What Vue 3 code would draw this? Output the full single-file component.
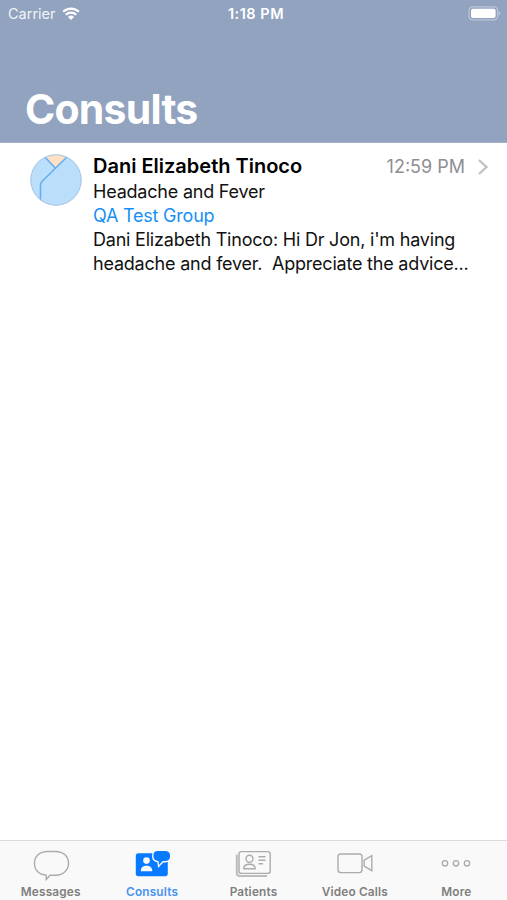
<template>
  <div class="screen">
    <header class="header">
      <div class="status-bar">
        <div class="carrier">
          <span>Carrier</span>
          <svg class="wifi" width="18" height="14" viewBox="0 0 18 14">
            <path d="M1.2 4.8A11 11 0 0 1 16.8 4.8" />
            <path d="M3.9 7.8A7.2 7.2 0 0 1 14.1 7.8" />
            <path class="dot" d="M9 13L6 10A4.3 4.3 0 0 1 12 10Z" />
          </svg>
        </div>
        <span class="clock">1:18 PM</span>
        <div class="battery">
          <svg width="33" height="16" viewBox="0 0 33 16">
            <rect class="case" x="1" y="0.8" width="28.6" height="13" rx="3.6" />
            <rect class="level" x="3" y="2.7" width="24.6" height="9.2" rx="2" />
            <path class="tip" d="M30.7 5Q32.3 5.7 32.3 7.3T30.7 9.6Z" />
          </svg>
        </div>
      </div>
      <h1>Consults</h1>
    </header>

    <main class="list">
      <article v-for="item in consults" :key="item.id" class="consult">
        <svg class="avatar" width="52" height="52" viewBox="0 0 52 52">
          <defs>
            <clipPath id="avatar-clip"><circle cx="26" cy="26" r="25.5" /></clipPath>
          </defs>
          <g clip-path="url(#avatar-clip)">
            <rect width="52" height="52" fill="#bbdefb" />
            <path d="M11 -1L25.5 14.2L41 -1Z" fill="#ffe0c2" />
            <path class="fold" d="M12 0L25.5 14.2M40 0L12.2 27.3Q10.5 29 10.5 31.5V47" />
          </g>
          <circle class="ring" cx="26" cy="26" r="25.2" />
        </svg>
        <div class="content">
          <div class="top-row">
            <h2>{{ item.name }}</h2>
            <time>{{ item.time }}</time>
            <svg class="chevron" width="12" height="18" viewBox="0 0 12 18">
              <path d="M2 2L9.5 9L2 16" />
            </svg>
          </div>
          <p class="subject">{{ item.subject }}</p>
          <p class="group">{{ item.group }}</p>
          <p class="preview">
            <span v-for="line in item.preview" :key="line">{{ line }}</span>
          </p>
        </div>
      </article>
    </main>

    <nav class="tab-bar">
      <button
        v-for="tab in tabs"
        :key="tab.id"
        class="tab"
        :class="[tab.id, { active: tab.id === activeTab }]"
        @click="activeTab = tab.id"
      >
        <svg v-if="tab.id === 'messages'" width="40" height="34" viewBox="0 0 40 34">
          <path d="M16.5 3.5H24.5C32.5 3.5 37.5 8.5 37.5 15.2S32.5 27.2 24.5 27.2H19.2L15.2 31.5V27.1C7.8 26.8 3.5 21.8 3.5 15.2C3.5 8.5 8.5 3.5 16.5 3.5Z" />
        </svg>
        <svg v-else-if="tab.id === 'consults'" width="40" height="34" viewBox="0 0 40 34">
          <rect class="solid" x="3.8" y="5.2" width="32" height="23" rx="2.6" />
          <circle class="cutout" cx="14.5" cy="12.6" r="3.3" />
          <path class="cutout" d="M8.8 23.3C8.8 19.4 11.1 17.8 14.5 17.8S20.3 19.4 20.3 23.3Z" />
          <path class="bubble" d="M26 2.2H33Q38.8 2.2 38.8 8T33 13.8H31L26.6 18.5L26 13.8Q20.7 13 20.7 8Q20.7 2.2 26 2.2Z" />
        </svg>
        <svg v-else-if="tab.id === 'patients'" width="40" height="34" viewBox="0 0 40 34">
          <path class="shadow" d="M3.8 6.5V25Q3.8 28 7 28H34" />
          <rect x="6" y="3.6" width="31.2" height="21.8" rx="2.5" />
          <circle cx="16.5" cy="10.8" r="3.5" />
          <path d="M10.8 20.8C10.8 17.7 13.3 16.2 16.5 16.2S22.2 17.7 22.2 20.8Z" />
          <path d="M25.5 8.8H32.5M25.5 12.3H32.5M25.5 15.8H30" />
        </svg>
        <svg v-else-if="tab.id === 'video'" width="40" height="34" viewBox="0 0 40 34">
          <rect x="3" y="6" width="24" height="18.6" rx="2.8" />
          <path d="M29.2 12.2L36.8 7.7V22.7L29.2 18.2Z" />
        </svg>
        <svg v-else width="40" height="34" viewBox="0 0 40 34">
          <circle cx="9" cy="15.3" r="2.7" />
          <circle cx="20" cy="15.3" r="2.7" />
          <circle cx="31" cy="15.3" r="2.7" />
        </svg>
        <span class="label">{{ tab.label }}</span>
      </button>
    </nav>
  </div>
</template>

<script setup>
import { ref } from 'vue'

const activeTab = ref('consults')

const consults = ref([
  {
    id: 1,
    name: 'Dani Elizabeth Tinoco',
    time: '12:59 PM',
    subject: 'Headache and Fever',
    group: 'QA Test Group',
    preview: [
      "Dani Elizabeth Tinoco: Hi Dr Jon, i'm having",
      'headache and fever.  Appreciate the advice...'
    ]
  }
])

const tabs = [
  { id: 'messages', label: 'Messages' },
  { id: 'consults', label: 'Consults' },
  { id: 'patients', label: 'Patients' },
  { id: 'video', label: 'Video Calls' },
  { id: 'more', label: 'More' }
]
</script>

<style>
body {
  margin: 0;
  background: #fff;
}
</style>

<style scoped>
.screen {
  display: flex;
  flex-direction: column;
  height: 900px;
  font-family: Inter, 'Liberation Sans', sans-serif;
  color: #111;
  background: #fff;
}

h1,
h2,
p {
  margin: 0;
}

svg {
  display: block;
  flex: none;
}

.header {
  display: flex;
  flex-direction: column;
  justify-content: space-between;
  height: 143px;
  box-sizing: border-box;
  color: #fff;
  background: #92a3bf;
  border-bottom: 1px solid #a3aec5;
}

.status-bar {
  display: grid;
  grid-template-columns: 1fr auto 1fr;
  align-items: center;
  height: 27px;
  padding: 0 6px 0 8px;
  font-size: 14.5px;
}

.carrier {
  display: flex;
  align-items: center;
  gap: 6px;
  color: #f0f3f8;
}

.wifi path {
  fill: none;
  stroke: #fff;
  stroke-width: 2.3;
}

.wifi .dot {
  fill: #fff;
  stroke: none;
}

.clock {
  margin-left: 3px;
  font-weight: 600;
  letter-spacing: 0.5px;
}

.battery {
  justify-self: end;
}

.case {
  fill: none;
  stroke: #bac5d7;
  stroke-width: 1.2;
}

.level {
  fill: #fff;
}

.tip {
  fill: #c4cddd;
}

h1 {
  padding: 0 25px 8px;
  font-size: 41px;
  line-height: 50px;
  font-weight: 700;
  letter-spacing: -0.8px;
}

.list {
  flex: 1;
}

.consult {
  display: flex;
  gap: 11px;
  padding: 11px 18px 0 30px;
}

.fold {
  fill: none;
  stroke: #64b0f0;
  stroke-width: 1.6;
}

.ring {
  fill: none;
  stroke: #a5c5e2;
  stroke-width: 1;
}

.content {
  flex: 1;
}

.top-row {
  display: flex;
  align-items: center;
  height: 25px;
}

h2 {
  flex: 1;
  padding-bottom: 2px;
  font-size: 20px;
  line-height: 24px;
  font-weight: 600;
  color: #000;
  white-space: nowrap;
}

time {
  font-size: 18px;
  color: #8e8e93;
}

.chevron {
  margin-left: 12px;
}

.chevron path {
  fill: none;
  stroke: #c2c2c6;
  stroke-width: 2.3;
}

p {
  font-size: 18px;
  line-height: 24px;
  letter-spacing: -0.21px;
}

.subject {
  padding-top: 1px;
}

.group {
  color: #1690f5;
}

.preview span {
  display: block;
  white-space: pre;
}

.tab-bar {
  display: grid;
  grid-template-columns: repeat(5, 1fr);
  height: 60px;
  box-sizing: border-box;
  background: #f9f9f9;
  border-top: 1px solid #dcdcdc;
}

.tab {
  display: flex;
  flex-direction: column;
  align-items: center;
  padding: 7px 0 0;
  border: 0;
  background: none;
  font: inherit;
  color: #7f7f7f;
}

.tab svg {
  fill: none;
  stroke: #acacac;
  stroke-width: 1.4;
}

.tab .shadow {
  stroke: #bcbcbc;
  stroke-width: 2;
}

.tab .solid {
  fill: #087aff;
  stroke: none;
}

.tab .cutout {
  fill: #f9f9f9;
  stroke: none;
}

.tab .bubble {
  fill: #087aff;
  stroke: #f9f9f9;
  stroke-width: 1.4;
}

.label {
  font-size: 11.8px;
  line-height: 16px;
  font-weight: 600;
  letter-spacing: 0.18px;
  margin-top: 2px;
  white-space: nowrap;
}

.active {
  color: #4793f0;
}
</style>
